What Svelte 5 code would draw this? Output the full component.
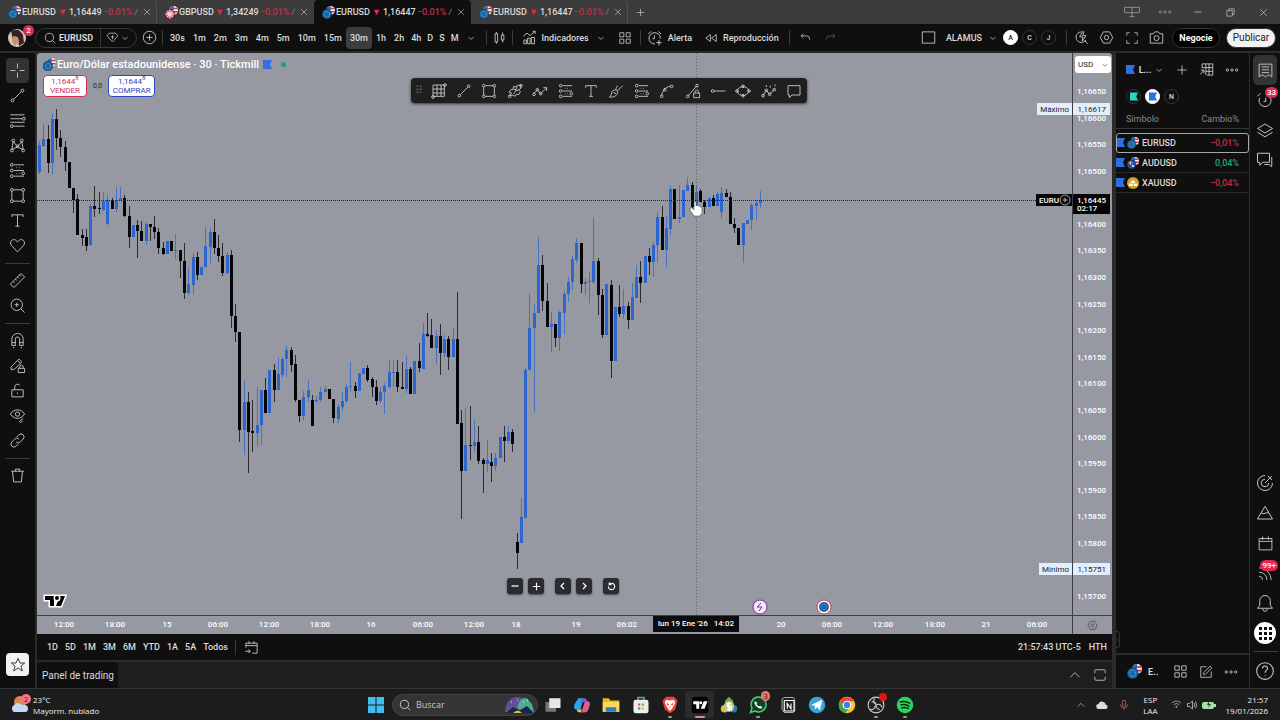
<script lang="ts">
	const tabs = [
		{ symbol: 'EURUSD', price: '1,16449', flag: 'eu' },
		{ symbol: 'GBPUSD', price: '1,34249', flag: 'gb' },
		{ symbol: 'EURUSD', price: '1,16447', flag: 'eu' },
		{ symbol: 'EURUSD', price: '1,16447', flag: 'eu' }
	];
	let activeTab = $state(2);

	const intervals = ['30s', '1m', '2m', '3m', '4m', '5m', '10m', '15m', '30m', '1h', '2h', '4h', 'D', 'S', 'M'];
	let interval = $state('30m');

	const ranges = ['1D', '5D', '1M', '3M', '6M', 'YTD', '1A', '5A', 'Todos'];

	const watchlist = [
		{ symbol: 'EURUSD', change: '−0,01%', flag: 'eu' },
		{ symbol: 'AUDUSD', change: '0,04%', flag: 'au' },
		{ symbol: 'XAUUSD', change: '−0,04%', flag: 'xau' }
	];

	// stroke icons on a 24 x 24 grid
	const icons: Record<string, string> = {
		cross: 'M12 2v7M12 15v7M2 12h7M15 12h7',
		line: 'M6.500 17.500l11-11M3 19a2 2 0 104 0a2 2 0 10-4 0M17 5a2 2 0 104 0a2 2 0 10-4 0',
		fib: 'M2 4h20M2 9.500h17M2 14.500h20M6 20h16M19 9.500a2 2 0 104 0a2 2 0 10-4 0M2 20a2 2 0 104 0a2 2 0 10-4 0',
		pattern: 'M4 18L6 6l6 8l6-8l2 12l-8-4zM2 19a2 2 0 104 0a2 2 0 10-4 0M18 19a2 2 0 104 0a2 2 0 10-4 0M4 5a2 2 0 104 0a2 2 0 10-4 0M16 5a2 2 0 104 0a2 2 0 10-4 0M10 13a2 2 0 104 0a2 2 0 10-4 0',
		projection: 'M7 4h14M7 12h14M7 20h14M2 4a2 2 0 104 0a2 2 0 10-4 0M2 12a2 2 0 104 0a2 2 0 10-4 0M2 20a2 2 0 104 0a2 2 0 10-4 0M18 16a2 2 0 104 0a2 2 0 10-4 0M10 8h1M14 8h1M10 16h1M14 16h1',
		rect: 'M6 4h12M6 20h12M4 6v12M20 6v12M2 4a2 2 0 104 0a2 2 0 10-4 0M18 4a2 2 0 104 0a2 2 0 10-4 0M2 20a2 2 0 104 0a2 2 0 10-4 0M18 20a2 2 0 104 0a2 2 0 10-4 0',
		text: 'M4 7V4h16v3M12 4v16M9 20h6',
		heart: 'M12 21L3.500 12C-.5 7 5 1.500 9.500 4.500L12 7l2.500-2.500C19 1.500 24.500 7 20.500 12z',
		ruler: 'M2 17L17 2l5 5L7 22zM6 13l2 2M9 10l2 2M12 7l2 2M15 4l2 2',
		zoom: 'M3 11a8 8 0 1016 0a8 8 0 10-16 0M17 17l5 5M11 8v6M8 11h6',
		magnet: 'M4 19V10a8 8 0 0116 0v9h-5v-9a3 3 0 00-6 0v9zM4 15h5M15 15h5M6.500 21v2M17.500 21v2',
		pencilLock: 'M3 14L14 3l4 4L8 17l-5 1zM13 16h9v6h-9zM15 16v-2a2.500 2.500 0 015 0v2M12 5l4 4',
		lock: 'M4 11h16v10H4zM8 11V7a4 4 0 017-2.500M12 15v2',
		eye: 'M2 10c5-8 15-8 20 0c-5 8-15 8-20 0zM9 10a3 3 0 106 0a3 3 0 10-6 0M14 21l6-5M16 22l3-2',
		link: 'M10 14a4 4 0 006 0l4-4a4 4 0 00-6-6l-3 3M14 10a4 4 0 00-6 0l-4 4a4 4 0 006 6l3-3',
		trash: 'M3 6h18M9 6V3h6v3M5 6l1.500 15h11L19 6',
		star: 'M12 2l3 7h7l-5.500 4.500L18.500 21L12 16.500L5.500 21l2-7.500L2 9h7z',
		search: 'M4 11a7 7 0 1014 0a7 7 0 10-14 0M16 16l5 5',
		gem: 'M2 9l4-5h12l4 5l-10 11zM12 8v7M9 11h6',
		down: 'M7 10l5 5l5-5',
		up: 'M4 16l8-8l8 8',
		plus: 'M12 4v16M4 12h16',
		circlePlus: 'M2 12a10 10 0 1020 0a10 10 0 10-20 0M12 7v10M7 12h10',
		candles: 'M5 6h4v13H5zM7 3v3M7 19v3M15 8h4v8h-4zM17 4v4M17 16v4',
		indicators: 'M3 22v-6h4v6zM9 22v-9h4v9zM15 22V12h5v10zM2 10l6-5l5 4l8-7M17 2h4v4',
		grid: 'M3 3h7v7H3zM14 3h7v7h-7zM3 14h7v7H3zM14 14h7v7h-7z',
		alarm: 'M12 21a8.500 8.500 0 118-8M11 8v5H8M2 6l4-4M17 2l4 4M18 15v8M14 19h8',
		replay: 'M11 6v12l-8-6zM21 6v12l-8-6z',
		undo: 'M8 5L4 9l4 4M4 9h10q6 0 6 7',
		redo: 'M16 5l4 4l-4 4M20 9H10q-6 0-6 7',
		square: 'M2 3h20v18H2z',
		quick: 'M12 3a8.500 8.500 0 107 13M17 17l5 5M14 2l-5 9h5l-1 7l6-9h-5l2-7',
		hexagon: 'M7 3h10l5 9l-5 9H7l-5-9zM8.500 12a3.500 3.500 0 107 0a3.500 3.500 0 10-7 0',
		full: 'M3 8V3h5M16 3h5v5M21 16v5h-5M8 21H3v-5',
		panel: 'M3 9V5q0-2 2-2h14q2 0 2 2v4M3 15v4q0 2 2 2h14q2 0 2-2v-4',
		camera: 'M2 6h5l2-3h6l2 3h5v15H2zM8 13a4 4 0 108 0a4 4 0 10-8 0',
		mesh: 'M3 3h17v17H3zM3 9h17M3 15h17M9 3v17M15 3v17M1 21a2 2 0 104 0a2 2 0 10-4 0M19 3a2 2 0 104 0a2 2 0 10-4 0',
		brushShape: 'M4 19l3-4l-4-1l3-4h3l1-5l3 1l3-3l5 1l-1 5l-3 1l3 3l-2 4h-4l-2 3l-3-2zM10 9l4 2l-4 5M15 5l-2 6h4M2 20a2 2 0 104 0a2 2 0 10-4 0M19 4a2 2 0 104 0a2 2 0 10-4 0',
		zigzag: 'M3 16l5-6l5 6l9-9M17 7h5v5M1 17a2 2 0 104 0a2 2 0 10-4 0M6 10a2 2 0 104 0a2 2 0 10-4 0M11 16a2 2 0 104 0a2 2 0 10-4 0',
		brush: 'M2 21c4-1 2-8 6-10s8 1 6 5s-6 6-12 5zM12 10c0-3 1-5 3-6M14 12l8-8M8 14l4 2',
		curve: 'M4 19C5 12 9 6 17 5M2 20a2 2 0 104 0a2 2 0 10-4 0M17 5a2 2 0 104 0a2 2 0 10-4 0M7 10a2 2 0 104 0a2 2 0 10-4 0',
		lineLock: 'M5 19L17 5M2 20a2 2 0 104 0a2 2 0 10-4 0M16 4a2 2 0 104 0a2 2 0 10-4 0M13 15h9v7h-9zM15 15v-2a2.500 2.500 0 015 0v2',
		hline: 'M6 12h17M2 12a2 2 0 104 0a2 2 0 10-4 0',
		ellipse: 'M3 12c3-9 15-9 18 0c-3 9-15 9-18 0M1 12a2 2 0 104 0a2 2 0 10-4 0M19 12a2 2 0 104 0a2 2 0 10-4 0M10 5a2 2 0 104 0a2 2 0 10-4 0M10 19a2 2 0 104 0a2 2 0 10-4 0',
		waves: 'M3 19l5-8l5 6l7-8M1 19a2 2 0 104 0a2 2 0 10-4 0M6 11a2 2 0 104 0a2 2 0 10-4 0M11 17a2 2 0 104 0a2 2 0 10-4 0M18 10a2 2 0 104 0a2 2 0 10-4 0M8 3v3M14 4v3M21 2v3',
		note: 'M3 4h18v14H9l-4 4v-4H3z',
		table: 'M5 10V3h17v18h-9M5 9h17M11 3v18M16 3v18M11 15h11M8 13l-6 7M8 18v-5H3',
		more: 'M2 12a2 2 0 104 0a2 2 0 10-4 0M10 12a2 2 0 104 0a2 2 0 10-4 0M18 12a2 2 0 104 0a2 2 0 10-4 0',
		list: 'M3 3h18v18l-4-3l-5 3l-5-3l-4 3zM7 7h10M7 11h10M7 15h10',
		clock: 'M14 5a8 8 0 11-9 4M13 9v5h-3M2 7l4-4',
		layers: 'M12 4l10 6l-10 6L2 10zM2 15l10 6l10-6',
		chat: 'M2 3h16v12H9l-4 4v-4H2zM21 8v13l-4-3h-6',
		target: 'M12 2a10 10 0 1010 10M12 7a5 5 0 105 5M12 12L21 3M16 3a10 10 0 015 5',
		pyramid: 'M12 3L2 20h20zM7 12c3 3 7-2 10 0',
		calendar: 'M3 5h18v16H3zM3 9h18M8 2v5M16 2v5',
		goto: 'M3 12V5h18v16h-8M3 9h18M8 2v4M16 2v4M2 18h8M7 15l3 3l-3 3',
		feed: 'M3 4a17 17 0 0117 17M3 10a11 11 0 0111 11M3 16a5 5 0 015 5',
		bell: 'M2 19h20l-3-4V9a7 7 0 00-14 0v6zM9 20a3 3 0 006 0',
		help: 'M2 12a10 10 0 1020 0a10 10 0 10-20 0M9 9a3 3 0 116 0c0 2-3 2-3 5M12 17v1',
		edit: 'M13 3H3v18h18V11M8 16v-3L19 2l3 3L11 16z',
		close: 'M5 5l14 14M19 5L5 19',
		minus: 'M5 12h14',
		restore: 'M4 8h12v12H4zM8 8V4h12v12h-4',
		left: 'M14 6l-6 6l6 6',
		right: 'M10 6l6 6l-6 6',
		reset: 'M7 7a7 7 0 11-2 5M7 3v5h5',
		screens: 'M1 5h22v8H1zM12 5v14M8 19h8',
		wifi: 'M2 9c6-6 14-6 20 0M6 13c4-4 8-4 12 0M10 17l2 2l2-2c-1-2-3-2-4 0',
		volume: 'M3 9h4l6-5v16l-6-5H3zM16 8q3 4 0 8M19 5q5 7 0 14',
		mic: 'M9 3h6v11H9zM5 11q0 7 7 7t7-7M12 18v4'
	};

	const drawTools = ['cross', 'line', 'fib', 'pattern', 'projection', 'rect', 'text', 'heart', '-', 'ruler', 'zoom', '-', 'magnet', 'pencilLock', 'lock', 'eye', 'link', '-', 'trash'];
	const favourites = ['mesh', 'line', 'rect', 'brushShape', 'zigzag', 'projection', 'text', 'brush', 'projection', 'curve', 'lineLock', 'hline', 'ellipse', 'waves', 'note'];
	const taskApps = ['tasks', 'copilot', 'folder', 'store', 'brave', 'tv', 'money', 'whatsapp', 'notion', 'telegram', 'chrome', 'obs', 'spotify'];
	const running = ['brave', 'whatsapp', 'obs', 'spotify'];

	// high, body top, body bottom, low (u = up, d = down), one entry per half hour
	const series = `u141,145,172,174 u124,139,146,147 d125,139,163,173 u114,119,163,174 d109,119,138,150 d130,138,147,157 d141,147,162,171 d162,162,188,188
	d188,188,200,213 d194,199,235,235 d229,235,238,246 d229,237,246,251 u203,206,245,246 d186,206,209,217 d192,208,209,214 u192,201,210,211 u195,200,224,225
	d198,200,209,209 u187,200,209,212 u187,198,200,201 d195,198,216,217 d206,216,237,248 u225,225,237,237 d220,225,231,258 d221,231,241,241 u222,224,241,245
	d224,224,227,241 d216,227,232,239 d228,232,248,254 d242,248,254,255 u241,241,254,254 d241,241,251,251 u234,250,251,259 d250,250,261,278 d243,261,293,299
	u267,284,293,295 u253,257,285,295 d252,257,275,280 u267,267,275,275 u227,246,267,268 u228,232,247,263 d219,232,248,254 d235,248,256,262 d243,256,273,276
	u252,255,273,274 d250,255,316,328 d304,316,332,342 d332,332,430,442 u380,402,430,455 d392,402,432,473 d400,431,433,452 u387,425,433,447 u390,390,425,445
	d378,390,413,413 u370,370,413,413 d364,370,390,402 u357,374,390,390 u357,359,375,378 u346,350,359,377 d347,350,365,372 d355,364,400,402 d400,400,416,422
	u391,397,416,420 u380,390,397,402 d395,400,426,426 u396,400,401,403 u387,392,400,402 u386,389,392,393 d389,389,399,399 d399,399,418,423 u404,407,419,423
	u392,401,407,411 u384,387,401,403 u362,386,387,392 d382,386,391,398 u373,373,391,391 u368,368,374,374 d365,368,380,382 d377,379,387,397 d380,387,401,405
	u387,392,401,403 u383,386,392,414 u360,372,387,388 u360,372,373,387 d360,372,387,392 d362,387,389,389 u356,369,389,393 d367,369,394,394 u361,361,394,394
	d343,361,368,372 u323,334,369,369 d313,334,336,337 d319,335,348,348 u330,336,348,364 d324,336,353,375 u335,339,353,357 d336,339,357,370 u328,339,357,357
	d292,339,424,424 d410,423,471,519 u408,445,471,471 d406,445,446,460 u420,442,446,452 d426,442,461,464 d458,460,464,493 u440,460,464,472 d453,462,466,482
	u453,458,466,471 u437,437,458,458 d426,437,441,462 u426,432,441,443 d429,432,444,452 d533,542,553,569 u498,517,543,543 u368,370,518,518 u293,328,370,370
	u304,313,328,412 u237,265,313,313 d255,265,301,311 d283,301,327,327 u312,324,327,352 d324,324,338,347 u311,312,338,351 u291,294,313,334 u277,282,294,302
	u256,259,282,290 u238,243,260,263 d243,243,284,293 u278,282,284,295 u272,281,282,303 u217,261,282,284 d258,261,295,315 d289,295,335,338 u284,284,335,335
	d280,285,361,378 u307,307,361,361 d285,307,314,317 u289,306,314,319 d302,306,320,329 u283,297,320,320 u265,277,298,298 d261,277,283,303 u256,256,283,283
	d248,256,262,275 u242,245,262,277 u212,217,245,263 d206,217,250,250 u216,228,250,267 u186,189,229,235 d189,189,219,219 u185,217,219,223 u190,190,217,217
	u177,185,191,191 d182,185,207,208 u186,192,208,208 d189,191,202,202 d200,202,207,214 u198,198,207,207 d195,198,206,206 u192,194,206,206 u187,193,212,219
	d189,193,197,197 d192,197,224,224 d218,224,228,233 d228,228,245,245 u223,223,245,263 u220,220,224,224 u203,205,220,230 u200,203,206,220 u191,200,203,208`;

	const top = 53;
	const step = 4.265;
	const candles = series.split(/\s+/).map((entry, i) => {
		const [high, open, close, low] = entry.slice(1).split(',').map((v) => Number(v) - top);
		return { up: entry[0] === 'u', x: Math.round(2 + i * step), high, open, close, low };
	});

	const priceY = (price: number) => Math.round(38 + (1.1665 - price) * 53160);
	const prices = Array.from({ length: 20 }, (_, i) => 1.1665 - i * 0.0005).filter((p) => Math.abs(p - 1.1645) > 0.0001);
	const format = (price: number) => price.toFixed(5).replace('.', ',');

	const times: [number, string][] = [
		[27, '12:00'], [78, '18:00'], [130, '15'], [181, '06:00'], [232, '12:00'], [283, '18:00'], [334, '16'], [386, '06:00'],
		[437, '12:00'], [479, '18'], [539, '19'], [590, '06:02'], [744, '20'], [795, '06:00'], [846, '12:00'], [898, '18:00'], [949, '21'], [1000, '06:00']
	];
</script>

{#snippet icon(name: string, size = 16)}
	<svg class="icon" width={size} height={size} viewBox="0 0 24 24" aria-hidden="true"><path d={icons[name]} /></svg>
{/snippet}

{#snippet flag(kind: string, size = 13)}
	<svg width={size} height={size} viewBox="0 0 24 24" aria-hidden="true">
		{#if kind === 'xau'}
			<circle cx="12" cy="12" r="12" fill="#d2a02c" />
			<path d="M9 7h6l2 5H7zM4 13h7l2 5H3zM13 13h7l2 5h-8z" fill="#fff5d8" />
		{:else}
			<circle cx="16" cy="8" r="8" fill="#f4f0f3" />
			<path d="M15 3h7l2 3h-9zM15 9h9l-1 3h-8z" fill="#d73547" />
			<path d="M8 8a8 8 0 018-8v8z" fill="#2f63b5" />
			<circle cx="9" cy="15" r="9" fill={kind === 'gb' ? '#d9455c' : kind === 'au' ? '#2353a0' : '#1769ad'} stroke="#111c2b" />
			{#if kind === 'gb'}
				<path d="M9 7v16M1 15h16M4 10l10 10M14 10L4 20" stroke="#f2dfe5" stroke-width="2" />
			{:else if kind === 'au'}
				<path d="M3 12h8M7 8v8" stroke="#f0a5ae" stroke-width="2" />
				<circle cx="12" cy="18" r="2" fill="#fff" />
			{:else}
				<circle cx="9" cy="15" r="5" fill="none" stroke="#b4c98b" stroke-width="1.500" stroke-dasharray="1.500 2.500" />
			{/if}
		{/if}
	</svg>
{/snippet}

{#snippet ribbon(color: string)}
	<svg width="9" height="9" viewBox="0 0 9 9" aria-hidden="true"><path d="M0 0h9L7 4.500L9 9H0z" fill={color} /></svg>
{/snippet}

{#snippet app(name: string)}
	<svg width="18" height="18" viewBox="0 0 24 24" aria-hidden="true">
		{#if name === 'tasks'}
			<path d="M2 8h14v13H2z" fill="#777" /><path d="M7 3h15v13H7z" fill="#e7e7e7" />
		{:else if name === 'copilot'}
			<path d="M7 3h7l-4 15H5q-5 0-3-7z" fill="#29a6e4" />
			<path d="M14 3q3 0 4 4h2q4 1 2 7l-2 5q-1 3-5 3h-4l5-15z" fill="#dd5b91" />
			<path d="M5 18h7l-2 4q-5 0-5-4z" fill="#efc14d" /><path d="M11 3h4q3 0 4 5h-4q-4 0-6 5z" fill="#6964dc" />
		{:else if name === 'folder'}
			<path d="M1 3h8l2 3h12v15H1z" fill="#e9b92c" /><path d="M1 8h22v13H1z" fill="#ffda57" /><path d="M5 15h14v6H5z" fill="#2c7fc3" />
		{:else if name === 'store'}
			<path d="M8 6V2h8v4" fill="none" stroke="#48a7d8" stroke-width="2" />
			<rect x="2" y="5" width="20" height="18" rx="3" fill="#ededed" />
			<path d="M8 10h3v3H8z" fill="#ef5b40" /><path d="M13 10h3v3h-3z" fill="#70b53f" /><path d="M8 15h3v3H8z" fill="#3b8bd9" /><path d="M13 15h3v3h-3z" fill="#efba36" />
		{:else if name === 'brave'}
			<path d="M7 1h10l5 5l-3 12l-7 5l-7-5L2 6z" fill="#f03e32" />
			<path d="M7 5l5 1l5-1l2 4l-3 6l-4 5l-4-5l-3-6z" fill="#fff" /><path d="M7 9l4 2l-2 2zM17 9l-4 2l2 2zM11 14h2l-1 2z" fill="#f03e32" />
		{:else if name === 'tv'}
			<rect x="1" y="1" width="22" height="22" rx="4" fill="#050505" />
			<path d="M3 7h8v10H7v-6H3zM17 7h5l-4 10h-5z" fill="#fff" /><circle cx="13" cy="9" r="2" fill="#fff" />
		{:else if name === 'money'}
			<path d="M12 1l5 5l2 7H6l1-7z" fill="#71a95a" /><circle cx="6" cy="17" r="5" fill="#d8c045" /><circle cx="18" cy="17" r="5" fill="#267da9" />
			<circle cx="12" cy="14" r="7" fill="#b8c98b" /><path d="M15 10h-5v4h5v4H9M12 8v12" fill="none" stroke="#fff" stroke-width="2" />
		{:else if name === 'whatsapp'}
			<path d="M2 22l2-6a10 10 0 114 4z" fill="#153e26" stroke="#42d36b" stroke-width="2" />
			<path d="M8 7q-2 2 1 6t7 4l2-2l-3-2l-2 1l-3-3l1-2z" fill="#e9fff0" />
		{:else if name === 'notion'}
			<path d="M4 4l3-2h12l2 3v15l-2 2H7l-3-4z" fill="#202020" stroke="#ddd" />
			<path d="M7 6h13v14H7zM11 17V10l5 7v-7" fill="none" stroke="#fff" stroke-width="1.500" />
		{:else if name === 'telegram'}
			<circle cx="12" cy="12" r="11" fill="#38a5dc" /><path d="M4 12l15-7l-3 14l-4-4l-3 3v-5z" fill="#fff" />
		{:else if name === 'chrome'}
			<circle cx="12" cy="12" r="11" fill="#f3c832" /><path d="M2.500 7a11 11 0 0119 0H12l-4 7z" fill="#e94537" />
			<path d="M2.500 7L8 15l6 2l-4 6A11 11 0 012.500 7z" fill="#38a957" />
			<circle cx="12" cy="12" r="5" fill="#3f7ee8" stroke="#fff" stroke-width="1.500" />
		{:else if name === 'obs'}
			<circle cx="12" cy="12" r="10.500" fill="#222" stroke="#ccc" stroke-width="1.500" />
			<path d="M12 11q-5-3-2-8M12 12q6-3 8 3M11 13q-1 6-7 5M6 8q6-1 6 4t5 6" fill="none" stroke="#ccc" stroke-width="1.500" />
		{:else if name === 'spotify'}
			<circle cx="12" cy="12" r="11" fill="#28d65c" /><path d="M5 8q8-2 14 2M6 12q7-2 12 2M7 16q6-2 10 1" fill="none" stroke="#17231a" stroke-width="2" />
		{/if}
	</svg>
{/snippet}

<div class="desktop">
	<nav class="tabs" aria-label="Pestañas">
		{#each tabs as tab, i}
			<div class="tab" class:active={i === activeTab}>
				<button class="tab-label" onclick={() => (activeTab = i)}>
					{@render flag(tab.flag)}
					<b>{tab.symbol}</b>
					<span class="drop">▼</span>
					<span class="tab-price">{tab.price}</span>
					<span class="tab-change">−0.01% <i>/</i></span>
				</button>
				<button class="tab-close" aria-label="Cerrar">{@render icon('close', 10)}</button>
			</div>
		{/each}
		<button class="square" aria-label="Nueva pestaña">{@render icon('plus', 11)}</button>
		<div class="window-buttons">
			<button aria-label="Diseños">{@render icon('screens', 16)}</button>
			<button aria-label="Más">{@render icon('more', 14)}</button>
			<button aria-label="Minimizar">{@render icon('minus', 12)}</button>
			<button aria-label="Restaurar">{@render icon('restore', 11)}</button>
			<button aria-label="Salir">{@render icon('close', 11)}</button>
		</div>
	</nav>

	<header class="toolbar">
		<button class="avatar" aria-label="Perfil">
			<svg width="18" height="18" viewBox="0 0 18 18" aria-hidden="true">
				<circle cx="9" cy="9" r="9" fill="#d8c8b8" /><path d="M3 2q8-4 12 4l1 8l-5 3l-1-8l-5 2z" fill="#36231f" /><path d="M5 7l5 1l1 5l-4 4l-3-4z" fill="#c98f75" />
			</svg>
			<span class="badge">2</span>
		</button>
		<div class="symbol">
			<button class="symbol-name">{@render icon('search', 14)}<b>EURUSD</b></button>
			<button class="symbol-gem" aria-label="Tipo de lista">{@render icon('gem', 13)}{@render icon('down', 12)}</button>
		</div>
		<button class="square" aria-label="Comparar">{@render icon('circlePlus', 15)}</button>
		<span class="sep"></span>
		<div class="intervals">
			{#each intervals as item}
				<button class:selected={item === interval} onclick={() => (interval = item)}>{item}</button>
			{/each}
			<button aria-label="Más intervalos">{@render icon('down', 12)}</button>
		</div>
		<span class="sep"></span>
		<button class="square" aria-label="Velas">{@render icon('candles', 15)}</button>
		<span class="sep"></span>
		<button class="labelled wide">{@render icon('indicators', 15)}Indicadores</button>
		<button class="square" aria-label="Favoritos">{@render icon('down', 12)}</button>
		<button class="square narrow" aria-label="Plantillas">{@render icon('grid', 14)}</button>
		<span class="sep"></span>
		<button class="labelled">{@render icon('alarm', 16)}Alerta</button>
		<button class="labelled">{@render icon('replay', 14)}Reproducción</button>
		<span class="sep history"></span>
		<button class="square" aria-label="Deshacer">{@render icon('undo', 13)}</button>
		<button class="square dim" aria-label="Rehacer">{@render icon('redo', 13)}</button>

		<div class="toolbar-right">
			<button class="square" aria-label="Disposición">{@render icon('square', 15)}</button>
			<button class="labelled layout">ALAMUS{@render icon('down', 12)}</button>
			<button class="round on">A</button>
			<button class="round">C</button>
			<button class="round">J</button>
			<span class="sep"></span>
			<button class="square" aria-label="Búsqueda rápida">{@render icon('quick', 15)}</button>
			<button class="square" aria-label="Configuración">{@render icon('hexagon', 15)}</button>
			<button class="square" aria-label="Pantalla completa">{@render icon('full', 14)}</button>
			<button class="square" aria-label="Captura">{@render icon('camera', 15)}</button>
			<button class="pill">Negocie</button>
			<button class="pill light">Publicar</button>
		</div>
	</header>

	<div class="body">
		<aside class="draw-bar">
			{#each drawTools as tool, i}
				{#if tool === '-'}
					<hr />
				{:else}
					<button class:selected={i === 0} aria-label={tool}>{@render icon(tool, 17)}</button>
				{/if}
			{/each}
			<button class="star" aria-label="Herramientas favoritas">{@render icon('star', 16)}</button>
		</aside>

		<div class="center">
			<main class="chart">
				<div class="plot">
					<svg class="canvas" width="100%" height="100%" role="img" aria-label="EURUSD 30 minutos">
						{#each candles as c}
							<g fill={c.up ? '#2e66cf' : '#050608'}>
								<rect class="wick" x={c.x} y={c.high} width="1" height={c.low - c.high} />
								<rect x={c.x - 1} y={c.open} width="3" height={Math.max(1, c.close - c.open)} />
							</g>
						{/each}
						<line class="cross-line" x1="0" x2="100%" y1="147.500" y2="147.500" />
						<line class="cross-line faint" x1="659.500" x2="659.500" y1="0" y2="100%" />
						<path class="hand" d="M657 163l-4-6q-1-3 2-2l2 2v-8q1-2 2 0v4q1-2 2 0q2-1 2 1q2-1 2 2v4l-2 3z" />
						<g fill="#fff" stroke="#7b2b99">
							<circle cx="723" cy="554" r="7" fill="#f8e9ff" /><path d="M724 550l-4 4h5l-3 4" fill="none" />
							<circle cx="787" cy="554" r="7" stroke="#d63b58" /><circle cx="787" cy="554" r="5" fill="#1769ad" stroke="none" />
							<circle cx="787" cy="554" r="3" fill="none" stroke="#6f99a0" stroke-dasharray="1 1" />
						</g>
					</svg>

					<div class="legend">
						<div class="title">
							{@render flag('eu')}
							<h1>Euro/Dólar estadounidense · 30 · Tickmill</h1>
							{@render ribbon('#2f6fe4')}
							<span class="status"></span>
						</div>
						<div class="quote">
							<button class="sell"><span>1,1644<sup>8</sup></span>VENDER</button>
							<span>0,0</span>
							<button class="buy"><span>1,1644<sup>8</sup></span>COMPRAR</button>
						</div>
					</div>

					<div class="favourites">
						<span class="grip">⠿</span>
						{#each favourites as tool}
							<button aria-label={tool}>{@render icon(tool, 16)}</button>
						{/each}
					</div>

					<div class="zoom-bar">
						<button aria-label="Alejar">{@render icon('minus', 12)}</button>
						<button aria-label="Acercar">{@render icon('plus', 11)}</button>
						<button class="group" aria-label="Izquierda">{@render icon('left', 12)}</button>
						<button aria-label="Derecha">{@render icon('right', 12)}</button>
						<button class="group" aria-label="Restablecer">{@render icon('reset', 11)}</button>
					</div>

					<span class="tag pale" style="top: {priceY(1.16617)}px">Máximo</span>
					<span class="tag pale" style="top: {priceY(1.15751)}px">Mínimo</span>
					<span class="tag dark" style="top: {priceY(1.16445)}px">EURU{@render icon('circlePlus', 12)}</span>

					<svg class="logo" width="24" height="14" viewBox="0 0 24 14" aria-label="TradingView">
						<path d="M2 2h9v10H7V6H2zM17 2h5l-4 10h-5z" /><circle cx="14" cy="4" r="2" />
					</svg>
				</div>

				<div class="price-axis">
					<select aria-label="Moneda"><option>USD</option></select>
					<span class="select-arrow">{@render icon('down', 10)}</span>
					{#each prices as price}
						<span class="price" style="top: {priceY(price)}px">{format(price)}</span>
					{/each}
					<span class="price pale" style="top: {priceY(1.16617)}px">1,16617</span>
					<span class="price pale" style="top: {priceY(1.15751)}px">1,15751</span>
					<span class="price countdown" style="top: {priceY(1.1643)}px">02:17</span>
					<span class="price dark" style="top: {priceY(1.16445)}px">1,16445</span>
				</div>

				<div class="time-axis">
					{#each times as [x, label]}
						<span style="left: {x}px">{label}</span>
					{/each}
					<span class="now" style="left: 659px">lun 19 Ene '26 &nbsp; 14:02</span>
				</div>
				<button class="axis-settings" aria-label="Ajustes de escala">{@render icon('hexagon', 11)}</button>
			</main>

			<div class="range-bar">
				{#each ranges as range}
					<button>{range}</button>
				{/each}
				<span class="sep"></span>
				<button aria-label="Ir a fecha">{@render icon('goto', 15)}</button>
				<span class="clock">21:57:43 UTC-5</span>
				<span>HTH</span>
			</div>

			<div class="panel-bar">
				<button class="panel-tab">Panel de trading</button>
				<button class="square" aria-label="Abrir panel">{@render icon('up', 14)}</button>
				<button class="square" aria-label="Maximizar panel">{@render icon('panel', 14)}</button>
			</div>
		</div>

		<aside class="watch">
			<button class="collapse" aria-label="Ocultar panel">{@render icon('right', 6)}</button>
			<div class="watch-head">
				{@render ribbon('#2f6fe4')}
				<button class="list-name"><b>L...</b>{@render icon('down', 12)}</button>
				<button aria-label="Añadir símbolo">{@render icon('plus', 14)}</button>
				<button aria-label="Vista avanzada">{@render icon('table', 15)}</button>
				<button aria-label="Más">{@render icon('more', 14)}</button>
			</div>
			<div class="chips">
				<button class="round" aria-label="Lista verde">{@render ribbon('#26d9c5')}</button>
				<button class="round on" aria-label="Lista azul">{@render ribbon('#2f6fe4')}</button>
				<button class="round">N</button>
			</div>
			<table>
				<thead>
					<tr><th>Símbolo</th><th>Cambio%</th></tr>
				</thead>
				<tbody>
					{#each watchlist as row, i}
						<tr class:current={i === 0}>
							<td><div class="cell">{@render ribbon('#2f6fe4')}{@render flag(row.flag, 12)}<span>{row.symbol}</span></div></td>
							<td class:positive={!row.change.startsWith('−')}>{row.change}</td>
						</tr>
					{/each}
				</tbody>
			</table>
			<div class="watch-foot">
				{@render flag('eu', 15)}
				<b>E..</b>
				<button aria-label="Detalles">{@render icon('grid', 15)}</button>
				<button aria-label="Notas">{@render icon('edit', 14)}</button>
				<button aria-label="Más">{@render icon('more', 14)}</button>
			</div>
		</aside>

		<aside class="rail">
			<button class="selected" aria-label="Lista">{@render icon('list', 17)}</button>
			<button aria-label="Alertas">{@render icon('clock', 18)}<span class="badge">33</span></button>
			<button aria-label="Capas">{@render icon('layers', 18)}</button>
			<button aria-label="Chats">{@render icon('chat', 18)}</button>
			<button class="push" aria-label="Filtros">{@render icon('target', 18)}</button>
			<button aria-label="Pine">{@render icon('pyramid', 18)}</button>
			<button aria-label="Calendario">{@render icon('calendar', 17)}</button>
			<button aria-label="Noticias">{@render icon('feed', 17)}<span class="badge">99+</span></button>
			<button aria-label="Notificaciones">{@render icon('bell', 18)}</button>
			<button class="apps" aria-label="Productos">
				<svg width="22" height="22" viewBox="0 0 22 22" aria-hidden="true">
					<circle cx="11" cy="11" r="11" fill="#fff" />
					<path d="M5 5h3v3H5zM10 5h3v3h-3zM15 5h3v3h-3zM5 10h3v3H5zM10 10h3v3h-3zM15 10h3v3h-3zM5 15h3v3H5zM10 15h3v3h-3zM15 15h3v3h-3z" fill="#111" />
				</svg>
			</button>
			<hr />
			<button aria-label="Ayuda">{@render icon('help', 20)}</button>
		</aside>
	</div>

	<footer class="taskbar">
		<div class="weather">
			<svg width="20" height="20" viewBox="0 0 20 20" aria-hidden="true">
				<circle cx="9" cy="8" r="6" fill="#d8894f" /><path d="M3 18a4 4 0 010-7q4-4 8 0q6-1 6 4q0 3-3 3z" fill="#c6d8f5" />
				<circle cx="15" cy="5" r="5" fill="#f3748a" /><text x="13" y="8">2</text>
			</svg>
			<div><span>23°C</span><span>Mayorm. nublado</span></div>
		</div>
		<div class="task-center">
			<button class="start" aria-label="Inicio">
				<svg width="16" height="16" viewBox="0 0 16 16" aria-hidden="true"><path d="M0 0h7.500v7.500H0zM8.500 0H16v7.500H8.500zM0 8.500h7.500V16H0zM8.500 8.500H16V16H8.500z" fill="#45bdf0" /></svg>
			</button>
			<label class="task-search">
				{@render icon('search', 14)}
				<input type="text" placeholder="Buscar" aria-label="Buscar" />
				<svg width="29" height="18" viewBox="0 0 29 18" aria-hidden="true">
					<path d="M0 16Q1 2 11 1t18 15z" fill="#63518f" /><path d="M12 17Q12 2 21 2q7 4 8 15z" fill="#4eaa91" />
					<path d="M1 17l7-6l7 3l7-4l7 7z" fill="#15264c" /><path d="M8 17q5-5 9 0z" fill="#e5b44c" /><path d="M6 6h1M12 4h1M18 6h1M22 4h1" stroke="#eee" />
				</svg>
			</label>
			<div class="task-apps">
				{#each taskApps as name}
					<button class:focused={name === 'tv'} class:running={running.includes(name)} aria-label={name}>
						{@render app(name)}
						{#if name === 'whatsapp'}<span class="badge soft">3</span>{/if}
						{#if name === 'obs'}<span class="record"></span>{/if}
					</button>
				{/each}
			</div>
		</div>
		<div class="tray">
			{@render icon('up', 10)}
			<svg width="12" height="12" viewBox="0 0 24 24" aria-hidden="true"><path d="M6 20a5 5 0 01-1-10q3-7 10-4q4 1 4 5q5 1 4 6q-1 3-4 3z" fill="#dcdcdc" /></svg>
			<span class="mic">{@render icon('mic', 12)}</span>
			<div class="lang"><span>ESP</span><span>LAA</span></div>
			<div class="status-icons">
				{@render icon('wifi', 11)}
				{@render icon('volume', 12)}
				<svg width="14" height="10" viewBox="0 0 14 10" aria-hidden="true"><rect y="2" width="12" height="7" rx="2" fill="#a6dfa5" /><path d="M12 4h2v3h-2z" fill="#a6dfa5" /><path d="M7 1L5 5h2L6 8l3-4H7z" fill="#263c26" /></svg>
			</div>
			<div class="date"><span>21:57</span><span>19/01/2026</span></div>
		</div>
	</footer>
</div>

<style>
	:global(body) {
		margin: 0;
		background: #0f0f0f;
	}

	.desktop {
		display: flex;
		flex-direction: column;
		min-height: 100vh;
		font-family: Roboto, sans-serif;
		font-size: 9px;
		font-weight: 500;
		color: #dbdbdb;
		background: #0f0f0f;
	}

	button {
		display: flex;
		align-items: center;
		justify-content: center;
		padding: 0;
		border: none;
		background: none;
		color: inherit;
		font: inherit;
		white-space: nowrap;
		cursor: pointer;
	}

	svg {
		flex: none;
	}

	.icon {
		fill: none;
		stroke: currentColor;
		stroke-width: 1.3;
	}

	.sep {
		flex: none;
		width: 1px;
		height: 15px;
		background: #3a3a3a;
	}

	.badge {
		position: absolute;
		top: 0;
		right: -2px;
		min-width: 5px;
		padding: 0 3px;
		border-radius: 6px;
		background: #e02850;
		color: #fff;
		font-size: 8px;
		line-height: 11px;
		text-align: center;
	}

	/* Window tabs */
	.tabs {
		display: flex;
		height: 24px;
		background: #3c3c3c;
	}

	.tab {
		display: flex;
		align-items: center;
		justify-content: space-between;
		width: 149px;
		padding-left: 8px;
		border-radius: 4px 4px 0 0;
	}

	.tab:first-child,
	.tab:nth-child(4) {
		box-shadow: inset -1px 0 #505050;
	}

	.tab.active {
		background: #0f0f0f;
	}

	.tab-label {
		width: 131px;
		justify-content: flex-start;
		font-size: 9px;
		overflow: hidden;
	}

	.tab-label b {
		width: 36px;
		padding-left: 1px;
		text-align: left;
		font-weight: 500;
	}

	.drop {
		width: 11px;
		color: #e02850;
		font-size: 9px;
		text-align: left;
	}

	.tab-price {
		width: 34px;
		text-align: left;
	}

	.tab-change {
		color: #bd304e;
	}

	.tab-change i {
		color: #777;
	}

	.tab-close {
		width: 18px;
		margin-right: 1px;
	}

	.square {
		width: 25px;
	}

	.window-buttons {
		display: grid;
		grid-template-columns: repeat(5, 33px);
		margin-left: auto;
	}

	.window-buttons button:nth-child(-n + 2) {
		color: #999;
	}

	/* Toolbar */
	.toolbar {
		display: flex;
		align-items: center;
		height: 27px;
		padding: 0 4px 0 8px;
		border-bottom: 2px solid #2b2b2b;
	}

	.toolbar button {
		height: 22px;
	}

	.toolbar .avatar {
		position: relative;
		width: 18px;
		margin-right: 9px;
	}

	.avatar .badge {
		top: -2px;
		right: -8px;
	}

	.symbol {
		display: flex;
		border: 1px solid #353535;
		border-radius: 11px;
	}

	.toolbar .symbol button {
		height: 18px;
	}

	.symbol-name {
		width: 65px;
		gap: 2px;
		border-right: 1px solid #353535;
	}

	.symbol-gem {
		width: 35px;
	}

	.intervals {
		display: flex;
		padding: 0 6px 0 3px;
	}

	.intervals button {
		padding: 0 4px;
		border-radius: 4px;
	}

	/* one-letter intervals sit closer together */
	.intervals button:nth-child(n + 12) {
		padding: 0 3px;
	}

	.intervals .selected {
		background: #3d3d3d;
	}

	.labelled {
		gap: 5px;
		padding: 0 6px;
	}

	.wide {
		padding: 0 0 0 9px;
	}

	.narrow {
		width: 22px;
		margin-right: 4px;
	}

	.history {
		margin: 0 3px 0 4px;
	}

	.dim {
		color: #666;
	}

	.toolbar-right {
		display: flex;
		align-items: center;
		margin-left: auto;
	}

	.toolbar .layout {
		padding: 0 4px 0 5px;
	}

	.round,
	.toolbar .round {
		box-sizing: border-box;
		width: 15px;
		height: 15px;
		margin-right: 4px;
		border: 1px solid #353535;
		border-radius: 50%;
		font-size: 7px;
	}

	.round.on {
		border-color: #fff;
		background: #fff;
		color: #111;
	}

	.toolbar-right .sep {
		margin: 0 2px 0 6px;
	}

	.toolbar .pill {
		box-sizing: border-box;
		width: 48px;
		height: 20px;
		margin-left: 3px;
		border: 1px solid #353535;
		border-radius: 10px;
		background: #000;
		color: #fff;
		font-weight: 700;
	}

	.toolbar .pill.light {
		width: 50px;
		margin-left: 6px;
		background: #f3f3f3;
		color: #222;
		font-size: 10px;
		font-weight: 400;
	}

	/* Main area */
	.body {
		flex: 1;
		display: grid;
		grid-template-columns: 35px 1fr 134px 30px;
	}

	.draw-bar {
		display: flex;
		flex-direction: column;
		align-items: center;
		padding: 5px 0 12px;
		color: #c6c6c6;
	}

	.draw-bar button {
		width: 23px;
		height: 25px;
		border-radius: 4px;
	}

	.draw-bar .selected,
	.rail .selected {
		background: #333;
	}

	hr {
		width: 25px;
		height: 1px;
		margin: 5px 0 4px;
		border: none;
		background: #3a3a3a;
	}

	.draw-bar .star {
		height: 23px;
		margin-top: auto;
		background: #f2f2f2;
		color: #222;
	}

	.center {
		display: flex;
		flex-direction: column;
		min-width: 0;
		border-left: 2px solid #2b2b2b;
		border-right: 4px solid #2b2b2b;
	}

	.chart {
		flex: 1;
		display: grid;
		grid-template-columns: 1fr 39px;
		grid-template-rows: 1fr 18px;
		overflow: hidden;
		border-radius: 3px 3px 0 0;
		background: #9699a2;
		font-size: 8px;
		color: #fff;
	}

	.plot {
		position: relative;
		overflow: hidden;
		border-right: 1px solid #3d3f45;
		border-bottom: 1px solid #3d3f45;
	}

	.canvas {
		position: absolute;
		inset: 0;
	}

	.wick {
		opacity: 0.75;
	}

	.cross-line {
		stroke: #202124;
		stroke-dasharray: 1 1;
	}

	.faint {
		stroke: #5c5f66;
		stroke-dasharray: 1 2;
	}

	.hand {
		fill: #fff;
		stroke: #333;
		stroke-width: 0.5;
	}

	.legend {
		position: absolute;
		top: 4px;
		left: 6px;
	}

	.title {
		display: flex;
		align-items: center;
		height: 15px;
	}

	h1 {
		margin: 0 4px 0 1px;
		font-size: 11px;
		font-weight: 500;
	}

	.status {
		width: 5px;
		height: 5px;
		margin-left: 9px;
		border-radius: 50%;
		background: #14a17e;
	}

	.quote {
		display: flex;
		align-items: center;
		gap: 6px;
		margin-top: 3px;
		color: #222;
		font-size: 7px;
		font-weight: 400;
	}

	.quote button {
		flex-direction: column;
		box-sizing: border-box;
		width: 44px;
		height: 22px;
		border: 1px solid currentColor;
		border-radius: 4px;
		background: #fff;
		font-size: 8px;
		line-height: 9px;
	}

	.quote .buy {
		width: 47px;
	}

	.sell {
		color: #d0304f;
	}

	.buy {
		color: #2c46c4;
	}

	sup {
		font-size: 6px;
		line-height: 0;
	}

	.favourites {
		position: absolute;
		top: 25px;
		left: 374px;
		display: grid;
		grid-template-columns: 15px repeat(15, 1fr);
		align-items: center;
		width: 396px;
		height: 25px;
		border-radius: 4px;
		background: #1f1f1f;
		box-shadow: 0 1px 3px #333;
		color: #d0d0d0;
	}

	.grip {
		color: #666;
		font-size: 11px;
		text-align: center;
	}

	.zoom-bar {
		position: absolute;
		top: 525px;
		left: 470px;
		display: flex;
		gap: 5px;
	}

	.zoom-bar button {
		width: 16px;
		height: 16px;
		border-radius: 3px;
		background: #2b2c2e;
		box-shadow: 0 1px 2px #444;
	}

	.zoom-bar .icon {
		stroke-width: 2.5;
	}

	.zoom-bar .group {
		margin-left: 6px;
	}

	.tag,
	.price {
		position: absolute;
		right: 0;
		display: flex;
		align-items: center;
		height: 12px;
		padding: 0 3px;
		transform: translateY(-50%);
	}

	.price {
		right: 2px;
		padding: 0 4px;
	}

	.pale {
		background: #e2eefb;
		color: #222;
		font-weight: 400;
	}

	.dark {
		background: #050505;
	}

	.tag.dark {
		padding: 0 1px 0 3px;
	}

	.price.countdown {
		width: 29px;
		background: #050505;
	}

	.logo {
		position: absolute;
		bottom: 7px;
		left: 6px;
		fill: #000;
		stroke: #fff;
		stroke-width: 3;
		paint-order: stroke;
	}

	.price-axis {
		position: relative;
		border-bottom: 1px solid #3d3f45;
	}

	select {
		appearance: none;
		width: 36px;
		height: 17px;
		margin: 3px 0 0 2px;
		padding: 0 3px;
		border: none;
		border-radius: 3px;
		background: #fff;
		color: #222;
		font: inherit;
		font-weight: 400;
	}

	.select-arrow {
		position: absolute;
		top: 7px;
		right: 2px;
		display: flex;
		color: #222;
		pointer-events: none;
	}

	.time-axis {
		position: relative;
		border-right: 1px solid #3d3f45;
	}

	.time-axis span {
		position: absolute;
		line-height: 18px;
		transform: translateX(-50%);
	}

	.time-axis .now {
		padding: 0 5px;
		background: #0c0c0c;
		line-height: 16px;
		white-space: nowrap;
	}

	.axis-settings {
		color: #333;
	}

	.range-bar {
		display: flex;
		align-items: center;
		height: 26px;
		padding: 0 5px 0 6px;
		border-bottom: 2px solid #2b2b2b;
	}

	.range-bar button {
		padding: 0 3px 0 4px;
	}

	.range-bar .sep {
		margin: 0 4px;
	}

	.clock {
		margin: 0 8px 0 auto;
	}

	.panel-bar {
		display: flex;
		height: 26px;
		background: #1e1e1e;
	}

	.panel-tab {
		margin-right: auto;
		padding: 0 4px 0 5px;
		border-radius: 3px 3px 0 0;
		background: #0f0f0f;
		font-size: 10px;
		font-weight: 400;
	}

	/* Watchlist */
	.watch {
		position: relative;
		display: flex;
		flex-direction: column;
		border-right: 1px solid #2b2b2b;
	}

	.collapse {
		position: absolute;
		bottom: 40px;
		left: -1px;
		width: 5px;
		height: 17px;
		border: 1px solid #333;
		border-left: none;
		border-radius: 0 3px 3px 0;
		color: #888;
	}

	.watch-head {
		display: flex;
		align-items: center;
		height: 33px;
		padding-left: 10px;
	}

	.watch-head button {
		width: 25px;
	}

	.watch-head .list-name {
		width: 34px;
		gap: 2px;
	}

	.chips {
		display: flex;
		padding: 3px 10px 7px;
	}

	.chips .round :global(svg) {
		width: 8px;
	}

	table {
		width: 100%;
		border-spacing: 0;
		table-layout: fixed;
	}

	th {
		height: 15px;
		padding: 0 10px 2px;
		border-bottom: 1px solid #353535;
		color: #8b8b8b;
		font-weight: 400;
		text-align: left;
	}

	tbody::before {
		content: '';
		display: block;
		height: 4px;
	}

	td {
		height: 19px;
		padding: 0;
		border-bottom: 1px solid #2b2b2b;
	}

	th:last-child,
	td:last-child {
		padding-right: 10px;
		text-align: right;
	}

	td:last-child {
		color: #c42d49;
	}

	td.positive:last-child {
		color: #22a878;
	}

	.current {
		outline: 1px solid #a8a8a8;
		outline-offset: -1px;
		border-radius: 3px;
	}

	.cell {
		display: flex;
		align-items: center;
		gap: 2px;
	}

	.cell span {
		padding-left: 1px;
	}

	.watch-foot {
		display: flex;
		align-items: center;
		height: 33px;
		margin-top: auto;
		padding-left: 11px;
		border-top: 2px solid #2b2b2b;
	}

	.watch-foot b {
		width: 20px;
		padding-left: 6px;
	}

	.watch-foot button {
		width: 25px;
	}

	/* Right rail */
	.rail {
		display: flex;
		flex-direction: column;
		align-items: center;
		padding: 2px 0;
		color: #c6c6c6;
	}

	.rail button {
		position: relative;
		width: 24px;
		height: 30px;
		border-radius: 5px;
	}

	.rail .badge {
		top: 2px;
		right: -1px;
		padding: 0 2px;
	}

	.rail .push {
		margin-top: auto;
	}

	.rail hr {
		margin: 3px 0 4px;
	}

	/* Taskbar */
	.taskbar {
		display: grid;
		grid-template-columns: 1fr auto 1fr;
		align-items: center;
		height: 31px;
		border-top: 1px solid #353535;
		background: #1c1c1c;
		font-family: 'Open Sans', sans-serif;
		font-size: 8px;
		font-weight: 400;
		line-height: 11px;
		color: #eee;
	}

	.weather {
		display: flex;
		gap: 2px;
		padding-left: 11px;
	}

	.weather text {
		font-size: 7px;
		fill: #5b1522;
	}

	.weather div,
	.lang,
	.date {
		display: flex;
		flex-direction: column;
	}

	.task-center {
		display: flex;
		align-items: center;
	}

	.start {
		width: 32px;
	}

	.task-search {
		box-sizing: border-box;
		display: flex;
		align-items: center;
		gap: 4px;
		width: 146px;
		height: 22px;
		padding: 0 3px 0 5px;
		border: 1px solid #444;
		border-radius: 11px;
		background: #343434;
	}

	.task-search input {
		flex: 1;
		min-width: 0;
		padding: 0;
		border: none;
		outline: none;
		background: none;
		color: #eee;
		font: inherit;
		font-size: 9px;
	}

	.task-search input::placeholder {
		color: #c4c4c4;
	}

	.task-apps {
		display: grid;
		grid-template-columns: repeat(13, 1fr);
		width: 382px;
	}

	.task-apps button {
		position: relative;
		height: 27px;
		border-radius: 3px;
	}

	.focused {
		background: #2c2c2c;
	}

	.running::after,
	.focused::after {
		content: '';
		position: absolute;
		bottom: 0;
		width: 4px;
		height: 2px;
		border-radius: 1px;
		background: #999;
	}

	.focused::after {
		width: 10px;
		background: #e58a91;
	}

	.badge.soft {
		right: 3px;
		padding: 0 2px;
		background: #ef7566;
		color: #351512;
		line-height: 10px;
	}

	.record {
		position: absolute;
		top: 2px;
		right: 4px;
		width: 8px;
		height: 8px;
		border-radius: 50%;
		background: #e41515;
	}

	.tray {
		display: flex;
		align-items: center;
		justify-content: flex-end;
		gap: 10px;
		padding-right: 12px;
	}

	.mic {
		display: flex;
		color: #c87b5a;
	}

	.lang {
		margin: 0 3px;
		text-align: center;
	}

	.status-icons {
		display: flex;
		align-items: center;
		gap: 4px;
	}

	.date {
		text-align: right;
	}
</style>
